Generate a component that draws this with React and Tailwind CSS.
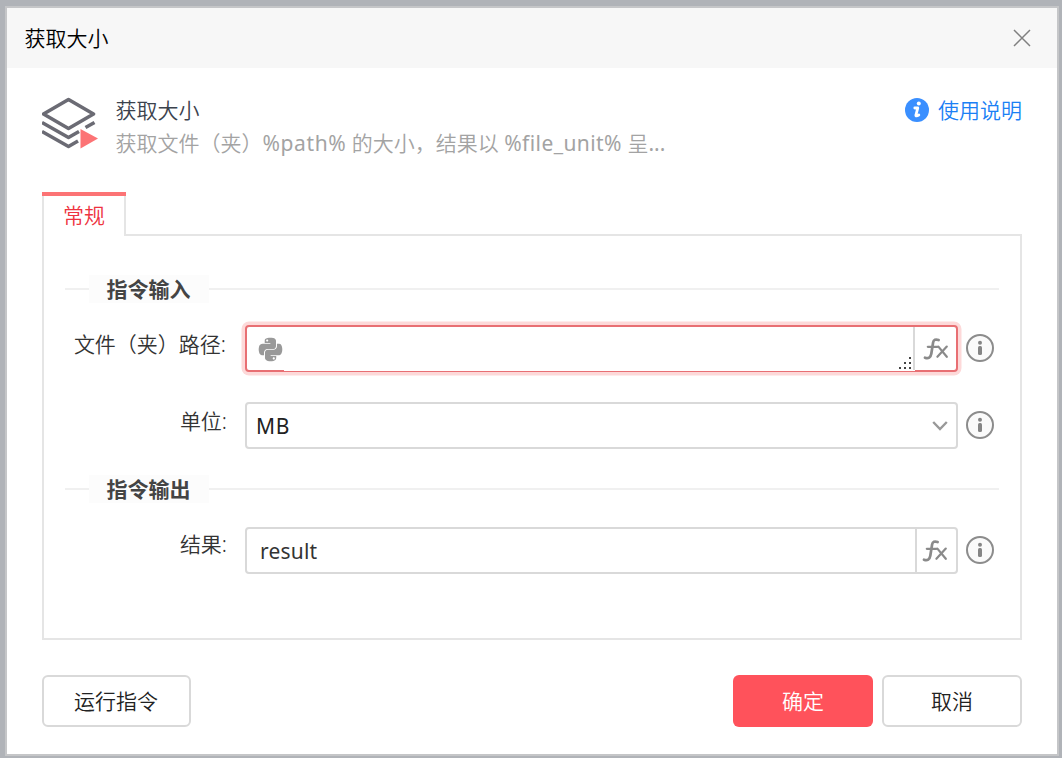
import React from "react";
import { FaPython } from "react-icons/fa";

function LayersIcon() {
  return (
    <svg width="56" height="54" viewBox="0 0 56 54" className="shrink-0" fill="none">
      <g stroke="#6b6b74" strokeWidth="3.6" strokeLinejoin="round">
        <path d="M26.5 2.5 51.5 17 26.5 31.5 1.5 17Z" />
        <path d="M0 25.5 26.5 40.5 37 34.5M43.5 30.5 52.5 25.5" />
        <path d="M0 34.5 26.5 49.5 36 44" />
      </g>
      <path d="M38.5 32V51.5L56 41.5Z" fill="#fc7375" />
    </svg>
  );
}

function HelpBadge() {
  return (
    <svg width="24" height="24" viewBox="0 0 24 24">
      <circle cx="12" cy="12" r="12" fill="#3a8fff" />
      <circle cx="13.8" cy="5.4" r="2" fill="#fff" />
      <path d="M9.8 10h3L10.9 17.2q-.2 1.500 2.900-.2" fill="none" stroke="#fff" strokeWidth="2.800" strokeLinejoin="round" strokeLinecap="round" />
    </svg>
  );
}

function InfoIcon() {
  return (
    <svg width="28" height="28" viewBox="0 0 28 28" className="-mt-[2px] ml-2 shrink-0">
      <circle cx="14" cy="14" r="13" fill="#fafafa" stroke="#8c8c8c" strokeWidth="2" />
      <circle cx="14" cy="8.8" r="2" fill="#858585" />
      <rect x="12" y="12" width="4" height="9" rx="1.5" fill="#858585" />
    </svg>
  );
}

function FunctionIcon() {
  return (
    <svg width="26" height="22" viewBox="0 0 26 22" fill="none" stroke="#8a8a8a" strokeLinecap="round">
      <path strokeWidth="2.7" d="M15.600 2C12.600 1 10.600 1.700 10.100 4.600L8.300 15.800C7.700 19.500 5.400 20.900 2 19.700" />
      <path strokeWidth="2.200" d="M4.800 8.800H14.500" />
      <path strokeWidth="2.200" d="M15.400 8.600 23.800 18.800M23.800 8.600 14.400 18.800" />
    </svg>
  );
}

function ResizeGrip() {
  return (
    <svg width="12" height="12" viewBox="0 0 12 12" fill="#444">
      <path d="M10 0h2v2h-2zM5 5h2v2h-2zM10 5h2v2h-2zM0 10h2v2h-2zM5 10h2v2h-2zM10 10h2v2h-2z" />
    </svg>
  );
}

function SectionTitle({ children }) {
  return (
    <div className="mx-[21px] flex h-7 items-center">
      <div className="h-[2px] w-6 bg-[#f0f0f0]" />
      <div className="flex h-7 w-[120px] items-center bg-[#fcfcfc] pl-[17.5px] font-bold text-[#444]">
        {children}
      </div>
      <div className="h-[2px] flex-1 bg-[#f0f0f0]" />
    </div>
  );
}

function Row({ label, labelClass = "-mt-[10px]", children }) {
  return (
    <div className="flex h-[47px] items-center">
      <div className={"w-[183px] shrink-0 whitespace-nowrap text-right text-[#333] " + labelClass}>{label}</div>
      <div className="ml-[18px] flex h-[47px] w-[713px] shrink-0">{children}</div>
      <InfoIcon />
    </div>
  );
}

export default function App() {
  return (
    <div className="h-[758px] w-[1062px] overflow-hidden bg-[#b0b3b8] pl-[5px] pt-[6px] text-[21px] leading-7 font-[350] [font-family:'Noto_Sans','Noto_Sans_CJK_SC',sans-serif]">
      <div className="flex h-[750px] w-[1054px] flex-col border-2 border-[#c5c6c8] bg-white">
        <header className="flex h-[60px] shrink-0 items-center justify-between bg-[#f7f7f7] pl-[17.5px] pr-[26px] text-black">
          <span>获取大小</span>
          <svg width="18" height="18" viewBox="0 0 18 18" stroke="#808080" strokeWidth="1.5">
            <path d="M1 1 17 17M17 1 1 17" />
          </svg>
        </header>

        <main className="px-[35px]">
          <div className="flex h-[124px] items-start pt-7">
            <div className="pt-[1px]">
              <LayersIcon />
            </div>
            <div className="ml-[17.5px] flex flex-col whitespace-nowrap">
              <span className="h-[33px] text-[#3b424d]">获取大小</span>
              <span className="text-[#a3a3a3]">
                获取文件（夹）<span className="font-normal tracking-[0.6px]">%path%</span> 的大小，结果以{" "}
                <span className="font-normal tracking-[0.42px]">%file_unit%</span> 呈<span className="font-normal">...</span>
              </span>
            </div>
            <div className="ml-auto flex items-center text-[#1a80f5]">
              <HelpBadge />
              <span className="ml-[9px]">使用说明</span>
            </div>
          </div>

          <div className="flex h-11">
            <div className="w-[84px] border-t-4 border-[#fc7375]">
              <div className="flex h-10 items-center justify-center border-x-2 border-[#e5e5e5] pb-[3px] text-[#ee3340]">常规</div>
            </div>
            <div className="flex-1 border-b-2 border-[#e5e5e5]" />
          </div>

          <section className="h-[404px] border-2 border-t-0 border-[#e5e5e5] pt-[39px]">
            <SectionTitle>指令输入</SectionTitle>

            <div className="mt-[22px]">
              <Row label="文件（夹）路径:" labelClass="-mt-[10px] pr-[1px]">
                <div className="relative flex flex-1 rounded border-2 border-[#e86f73] bg-white ring-[3.5px] ring-[#fdd9d9]">
                  <div className="flex flex-1 items-center pl-[10px] pt-[2px] text-[#999]">
                    <FaPython size={27} />
                  </div>
                  <div className="flex items-end pb-[1px] pr-[2px]">
                    <ResizeGrip />
                  </div>
                  <div className="flex w-[43px] items-center justify-center border-l-2 border-[#d9d9d9] pl-[1px] pt-[1px]">
                    <FunctionIcon />
                  </div>
                  <div className="absolute -bottom-px left-[37px] right-[41px] h-px bg-white" />
                </div>
              </Row>
            </div>

            <div className="mt-[30px]">
              <Row label="单位:">
                <div className="flex flex-1 items-center justify-between rounded border-2 border-[#d9d9d9] pl-[9px] pr-2 text-[#222]">
                  <span className="font-normal tracking-[0.8px]">MB</span>
                  <svg width="16" height="12" viewBox="0 0 16 12" fill="none" stroke="#999" strokeWidth="2.4">
                    <path d="M1.2 2 8 9 14.8 2" />
                  </svg>
                </div>
              </Row>
            </div>

            <div className="mt-[26px]">
              <SectionTitle>指令输出</SectionTitle>
            </div>

            <div className="mt-6">
              <Row label="结果:" labelClass="-mt-[14px]">
                <div className="flex flex-1 items-stretch rounded border-2 border-[#d9d9d9] text-[#333]">
                  <div className="flex flex-1 items-center pl-[13px] font-normal tracking-[0.2px]">result</div>
                  <div className="flex w-[41px] items-center justify-center border-l-2 border-[#d9d9d9] pr-[3px]">
                    <FunctionIcon />
                  </div>
                </div>
              </Row>
            </div>
          </section>

          <footer className="mt-[35px] flex h-[52px] gap-[9px] text-[#222]">
            <button className="mr-auto w-[149px] rounded-md border-2 border-[#d9d9d9] pr-[1px]">运行指令</button>
            <button className="w-[140px] rounded-md bg-[#ff525b] text-white">确定</button>
            <button className="w-[140px] rounded-md border-2 border-[#d9d9d9]">取消</button>
          </footer>
        </main>
      </div>
    </div>
  );
}
